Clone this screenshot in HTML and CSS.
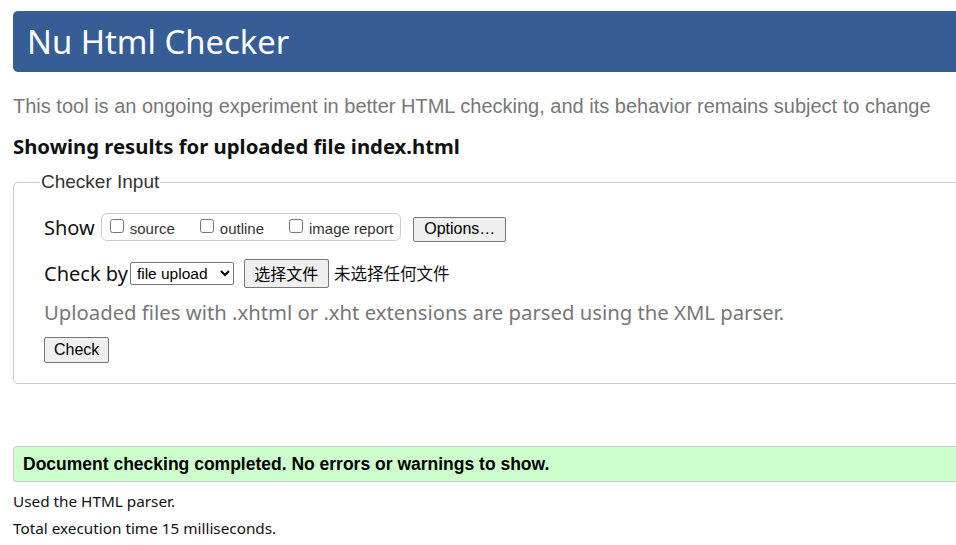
FILE: index.html
```html
<!DOCTYPE html>
<html lang="en">
<head>
<meta charset="utf-8">
<title>Nu Html Checker</title>
<link rel="stylesheet" href="styles.css">
</head>
<body>
<div class="page">
  <h1 class="banner">Nu Html Checker</h1>
  <p class="intro">This tool is an ongoing experiment in better HTML checking, and its behavior remains subject to change</p>
  <h2 class="showing">Showing results for uploaded file index.html</h2>
  <fieldset class="input">
    <legend>Checker Input</legend>
    <div class="row show-row">
      <span class="label">Show</span>
      <span class="opts">
        <label class="opt"><input type="checkbox">source</label>
        <label class="opt"><input type="checkbox">outline</label>
        <label class="opt"><input type="checkbox">image report</label>
      </span>
      <button class="btn opts-btn" type="button">Options…</button>
    </div>
    <div class="row by-row">
      <span class="label">Check by</span>
      <select class="sel"><option>file upload</option></select>
      <button class="btn file-btn" type="button">选择文件</button>
      <span class="nofile">未选择任何文件</span>
    </div>
    <p class="note">Uploaded files with .xhtml or .xht extensions are parsed using the XML parser.</p>
    <button class="btn check-btn" type="button">Check</button>
  </fieldset>
  <p class="success">Document checking completed. No errors or warnings to show.</p>
  <p class="meta">Used the HTML parser.</p>
  <p class="meta">Total execution time 15 milliseconds.</p>
</div>
</body>
</html>
```
FILE: styles.css
```css
html, body { margin: 0; padding: 0; overflow: hidden; background: #fff; }
body { font-family: "Noto Sans", "Noto Sans CJK SC", sans-serif; color: #111; }
.page { margin: 11px -20px 0 13px; }
.banner {
  margin: 0;
  background: #365d95;
  color: #fff;
  border-radius: 5px;
  height: 61px;
  box-sizing: border-box;
  padding: 0 0 0 14px;
  font-weight: normal;
  font-size: 32.8px;
  line-height: 61px;
}
.intro {
  margin: 21px 0 0 0;
  font-family: "Liberation Sans", Arial, sans-serif;
  font-size: 20px;
  line-height: 26px;
  color: #777;
}
.showing {
  margin: 13px 0 0 0;
  font-size: 20.3px;
  line-height: 28px;
  font-weight: bold;
  color: #111;
}
.input {
  margin: 12px 0 0 0;
  border: 1px solid #ccc;
  border-radius: 5px;
  padding: 20px 0 20px 30px;
  min-width: 0;
}
.input legend {
  font-family: "Liberation Sans", Arial, sans-serif;
  font-size: 19px;
  color: #333;
  padding: 0 1px;
  margin-left: -4px;
  line-height: 20px;
}
.row { display: flex; align-items: center; }
.label { font-size: 20px; color: #111; }
.show-row { height: 30px; }
.opts {
  display: flex;
  align-items: center;
  margin-left: 6px;
  border: 1px solid #ccc;
  border-radius: 6px;
  height: 28px;
  box-sizing: border-box;
  padding: 0 7px 0 5px;
  gap: 22px;
}
.opt {
  font-family: "Liberation Sans", Arial, sans-serif;
  font-size: 15px;
  color: #333;
  display: flex;
  align-items: center;
  padding-top: 2px;
}
.opt input { margin: 0 6px 5px 3px; width: 14px; height: 14px; }
.btn {
  font-family: "Liberation Sans", Arial, sans-serif;
  font-size: 16px;
  color: #000;
  background: #efefef;
  border: 1px solid #767676;
  border-radius: 2px;
  padding: 0 10px;
}
.opts-btn { margin-left: 12px; height: 25px; margin-top: 4px; }
.by-row { margin-top: 16px; height: 30px; }
.sel {
  margin-left: 2px;
  font-family: "Liberation Sans", Arial, sans-serif;
  font-size: 15.5px;
  height: 23px;
  width: 104px;
  border: 1px solid #767676;
  border-radius: 2px;
  background: #fff;
  color: #000;
  padding: 0 2px;
}
.file-btn {
  margin-left: 10px;
  height: 29px;
  width: 85px;
  padding: 0;
  font-family: "Noto Sans CJK SC", sans-serif;
  font-size: 16px;
}
.nofile { margin-left: 5px; font-family: "Noto Sans CJK SC", sans-serif; font-size: 16.5px; color: #111; }
.note {
  margin: 11px 0 0 0;
  font-size: 20.3px;
  line-height: 26px;
  color: #777;
}
.check-btn { margin-top: 12px; height: 26px; padding: 0 9px; font-size: 16px; }
.success {
  margin: 62px 0 0 0;
  background: #cfc;
  border: 1px solid #ccc;
  border-radius: 3px;
  height: 36px;
  box-sizing: border-box;
  padding: 0 0 0 9px;
  font-family: "Liberation Sans", Arial, sans-serif;
  font-weight: bold;
  font-size: 17.5px;
  line-height: 34px;
  color: #000;
}
.meta { margin: 8px 0 0 0; font-size: 15.3px; line-height: 19px; color: #111; }
.meta + .meta { margin-top: 8px; }
.success + .meta { margin-top: 10px; }
```
